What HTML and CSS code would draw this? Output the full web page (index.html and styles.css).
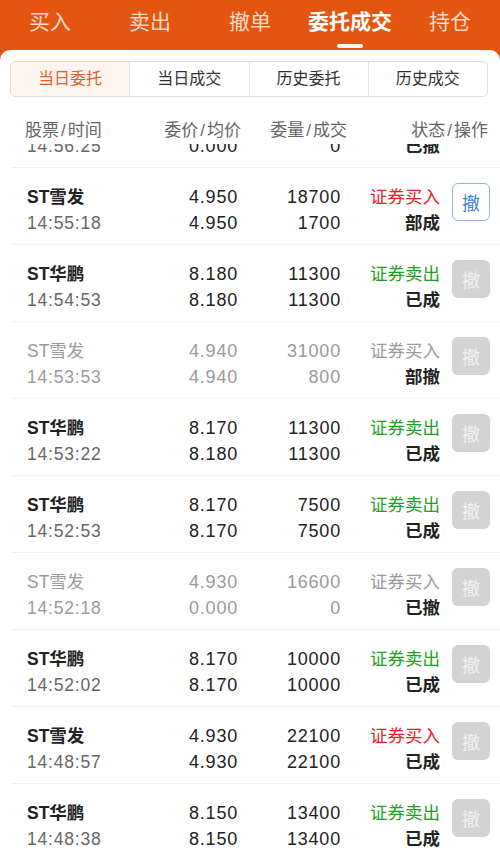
FILE: index.html
```html
<!DOCTYPE html>
<html lang="zh-CN">
<head>
    <meta charset="UTF-8">
    <meta name="viewport" content="width=device-width, initial-scale=1.0">
    <title>委托成交</title>
    <link rel="stylesheet" href="styles.css">
</head>
<body>
    <div class="topbar">
        <div class="tab">买入</div>
        <div class="tab">卖出</div>
        <div class="tab">撤单</div>
        <div class="tab active">委托成交</div>
        <div class="tab">持仓</div>
    </div>

    <div class="card">
        <div class="segments">
            <div class="seg active">当日委托</div>
            <div class="seg">当日成交</div>
            <div class="seg">历史委托</div>
            <div class="seg">历史成交</div>
        </div>

        <div class="list-head">
            <div>股票<span class="slash">/</span>时间</div>
            <div class="r">委价<span class="slash">/</span>均价</div>
            <div class="r">委量<span class="slash">/</span>成交</div>
            <div class="r">状态<span class="slash">/</span>操作</div>
        </div>

        <div class="list">
            <div class="rows">
                <!-- scrolled: only the tail of this row is still in view -->
                <div class="row partial">
                    <div class="time">14:56:25</div>
                    <div class="num">0.000</div>
                    <div class="num">0</div>
                    <div class="state">已撤</div>
                </div>
                <div class="row">
                    <div class="name">ST雪发</div>
                    <div class="num">4.950</div>
                    <div class="num">18700</div>
                    <div class="side buy">证券买入</div>
                    <div class="btn-cell"><button class="cancel live">撤</button></div>
                    <div class="time">14:55:18</div>
                    <div class="num">4.950</div>
                    <div class="num">1700</div>
                    <div class="state">部成</div>
                </div>
                <div class="row">
                    <div class="name">ST华鹏</div>
                    <div class="num">8.180</div>
                    <div class="num">11300</div>
                    <div class="side sell">证券卖出</div>
                    <div class="btn-cell"><button class="cancel" disabled>撤</button></div>
                    <div class="time">14:54:53</div>
                    <div class="num">8.180</div>
                    <div class="num">11300</div>
                    <div class="state">已成</div>
                </div>
                <div class="row dim">
                    <div class="name">ST雪发</div>
                    <div class="num">4.940</div>
                    <div class="num">31000</div>
                    <div class="side">证券买入</div>
                    <div class="btn-cell"><button class="cancel" disabled>撤</button></div>
                    <div class="time">14:53:53</div>
                    <div class="num">4.940</div>
                    <div class="num">800</div>
                    <div class="state">部撤</div>
                </div>
                <div class="row">
                    <div class="name">ST华鹏</div>
                    <div class="num">8.170</div>
                    <div class="num">11300</div>
                    <div class="side sell">证券卖出</div>
                    <div class="btn-cell"><button class="cancel" disabled>撤</button></div>
                    <div class="time">14:53:22</div>
                    <div class="num">8.180</div>
                    <div class="num">11300</div>
                    <div class="state">已成</div>
                </div>
                <div class="row">
                    <div class="name">ST华鹏</div>
                    <div class="num">8.170</div>
                    <div class="num">7500</div>
                    <div class="side sell">证券卖出</div>
                    <div class="btn-cell"><button class="cancel" disabled>撤</button></div>
                    <div class="time">14:52:53</div>
                    <div class="num">8.170</div>
                    <div class="num">7500</div>
                    <div class="state">已成</div>
                </div>
                <div class="row dim">
                    <div class="name">ST雪发</div>
                    <div class="num">4.930</div>
                    <div class="num">16600</div>
                    <div class="side">证券买入</div>
                    <div class="btn-cell"><button class="cancel" disabled>撤</button></div>
                    <div class="time">14:52:18</div>
                    <div class="num">0.000</div>
                    <div class="num">0</div>
                    <div class="state">已撤</div>
                </div>
                <div class="row">
                    <div class="name">ST华鹏</div>
                    <div class="num">8.170</div>
                    <div class="num">10000</div>
                    <div class="side sell">证券卖出</div>
                    <div class="btn-cell"><button class="cancel" disabled>撤</button></div>
                    <div class="time">14:52:02</div>
                    <div class="num">8.170</div>
                    <div class="num">10000</div>
                    <div class="state">已成</div>
                </div>
                <div class="row">
                    <div class="name">ST雪发</div>
                    <div class="num">4.930</div>
                    <div class="num">22100</div>
                    <div class="side buy">证券买入</div>
                    <div class="btn-cell"><button class="cancel" disabled>撤</button></div>
                    <div class="time">14:48:57</div>
                    <div class="num">4.930</div>
                    <div class="num">22100</div>
                    <div class="state">已成</div>
                </div>
                <div class="row">
                    <div class="name">ST华鹏</div>
                    <div class="num">8.150</div>
                    <div class="num">13400</div>
                    <div class="side sell">证券卖出</div>
                    <div class="btn-cell"><button class="cancel" disabled>撤</button></div>
                    <div class="time">14:48:38</div>
                    <div class="num">8.150</div>
                    <div class="num">13400</div>
                    <div class="state">已成</div>
                </div>
            </div>
        </div>
    </div>
</body>
</html>
```

FILE: styles.css
```css
html, body {
    margin: 0;
    height: 100%;
}
body {
    font-family: "Liberation Sans", "Noto Sans CJK SC", sans-serif;
    background-color: #e4560f;
    color: #222;
    display: flex;
    flex-direction: column;
    overflow: hidden;
}
.topbar {
    display: flex;
    height: 50px;
    flex-shrink: 0;
}
.tab {
    flex: 1;
    text-align: center;
    font-size: 21px;
    line-height: 44px;
    color: rgba(255,255,255,0.78);
    position: relative;
}
.tab.active {
    color: white;
    font-weight: bold;
}
.tab.active::after {
    content: "";
    position: absolute;
    left: 37px;
    top: 44px;
    width: 26px;
    height: 4px;
    border-radius: 2px;
    background-color: white;
}
.card {
    flex: 1;
    background-color: white;
    border-radius: 10px 10px 0 0;
    display: flex;
    flex-direction: column;
    min-height: 0;
}
.segments {
    display: flex;
    margin: 11px 12px 0 10px;
    border: 1px solid #dcdcdc;
    border-radius: 5px;
    overflow: hidden;
}
.seg {
    flex: 1;
    text-align: center;
    font-size: 16px;
    line-height: 34px;
    color: #333;
    border-left: 1px solid #e6e6e6;
}
.seg:first-child {
    border-left: none;
}
.seg.active {
    background-color: #fdf5f0;
    color: #e0602a;
}
.list-head {
    display: grid;
    grid-template-columns: 110px 106px 106px 141px;
    padding: 22px 0 1px 25px;
    font-size: 17px;
    line-height: 24px;
    color: #666;
}
.list-head .r {
    text-align: right;
}
.slash {
    margin: 0 2px;
}
.list {
    flex: 1;
    overflow: hidden;
    min-height: 0;
}
.row {
    display: grid;
    grid-template-columns: 123px 88px 103px 99px 50px;
    margin-left: 12px;
    padding: 16px 10px 8px 15px;
    border-bottom: 1px solid #f0f0f0;
    font-size: 17.5px;
    line-height: 26px;
}
.row.partial {
    grid-template-columns: 123px 88px 103px 99px;
    padding-top: 0;
    margin-top: -11px;
}
.name {
    font-weight: bold;
}
.time {
    color: #666;
    letter-spacing: 0.8px;
}
.num {
    text-align: right;
    letter-spacing: 0.8px;
    font-size: 18px;
}
.side, .state {
    text-align: right;
}
.state {
    font-weight: bold;
}
.buy {
    color: #e3232c;
}
.sell {
    color: #1e9f25;
}
.row.dim .name,
.row.dim .time,
.row.dim .num,
.row.dim .side {
    color: #9a9a9a;
    font-weight: normal;
}
.btn-cell {
    grid-row: span 2;
    display: flex;
    justify-content: flex-end;
    align-items: flex-start;
}
.cancel {
    width: 38px;
    height: 38px;
    margin-top: -1px;
    padding: 0;
    font-family: inherit;
    font-size: 18px;
    border-radius: 6px;
    border: none;
    background-color: #d3d3d3;
    color: #f2f2f2;
}
.cancel.live {
    background-color: white;
    border: 1px solid #8fb4e6;
    color: #3f80d8;
}
```
